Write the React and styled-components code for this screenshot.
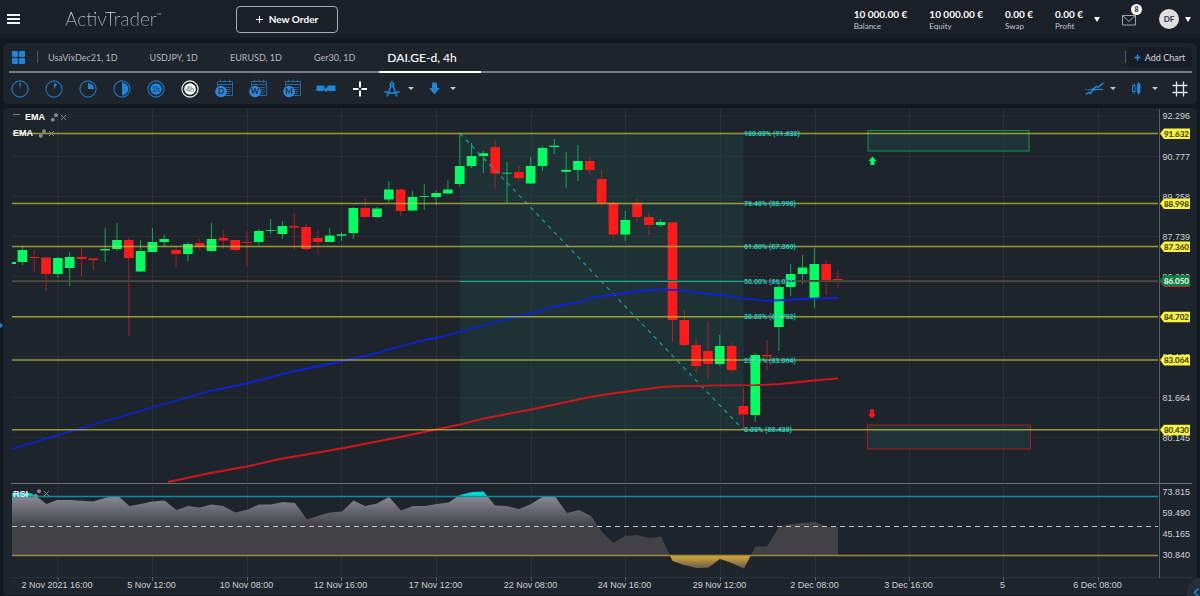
import React, { useState } from 'react';
import styled, { createGlobalStyle } from 'styled-components';

const GlobalStyle = createGlobalStyle`
  * {
    box-sizing: border-box;
  }

  body {
    margin: 0;
    background: #111820;
    color: #c3c6cb;
    font-family: Lato, 'Liberation Sans', sans-serif;
  }

  button {
    margin: 0;
    padding: 0;
    border: 0;
    background: none;
    color: inherit;
    font: inherit;
    cursor: pointer;
  }
`;

const Page = styled.div`
  position: relative;
  display: flex;
  flex-direction: column;
  padding-bottom: 1px;
  overflow: hidden;
`;

const Header = styled.header`
  display: flex;
  align-items: center;
  height: 38px;
  padding: 0 8px 0 7px;
  background: #1b1f27;
`;

const MenuButton = styled.button`
  display: flex;
  flex-direction: column;
  gap: 2px;
  width: 13px;

  span {
    height: 2px;
    background: #f2f3f4;
  }
`;

const Logo = styled.h1`
  width: 171px;
  margin: 0 0 0 45px;
  font-size: 19px;
  font-weight: 300;
  line-height: 24px;
  color: transparent;
  background: linear-gradient(#d8dce2 20%, #77808d 85%);
  background-clip: text;

  sup {
    font-size: 7px;
    line-height: 7px;
    vertical-align: 8px;
  }
`;

const NewOrder = styled.button`
  display: flex;
  align-items: center;
  justify-content: center;
  gap: 6px;
  width: 102px;
  height: 27px;
  border: 1px solid #a9abaf;
  border-radius: 4px;
  color: #fff;
  font-size: 10px;
  font-weight: 700;
`;

const Account = styled.div`
  display: flex;
  align-items: center;
  margin-left: auto;
`;

const Metrics = styled.dl`
  display: flex;
  gap: 22px;
  margin: 0;
`;

const Metric = styled.div`
  display: flex;
  flex-direction: column-reverse;

  dt {
    font-size: 8px;
    line-height: 10px;
  }

  dd {
    margin: 0;
    color: #fff;
    font-size: 10px;
    font-weight: 700;
    line-height: 13px;
  }
`;

const Caret = styled.button`
  display: flex;
  align-items: center;
  justify-content: center;
  width: ${(props) => (props.$wide ? '28px' : '8px')};
  height: 20px;

  &::before {
    content: '';
    border: solid transparent;
    border-width: ${(props) => (props.$small ? '3px 3px 0' : '5px 3px 0')};
    border-top-color: ${(props) => (props.$small ? '#c3c6cb' : '#fff')};
  }
`;

const Mail = styled.button`
  position: relative;
  display: flex;
  width: 14px;
  height: 12px;
  margin: 2px 23px 0 11px;
`;

const Badge = styled.span`
  position: absolute;
  top: -10px;
  right: -6px;
  width: 11px;
  height: 11px;
  border-radius: 50%;
  background: #fff;
  color: #1b1f27;
  font-size: 7px;
  font-weight: 900;
  line-height: 11px;
  text-align: center;
`;

const Avatar = styled.button`
  width: 20px;
  height: 20px;
  margin-right: 5px;
  border-radius: 50%;
  background: #dfdfe1;
  color: #3f4349;
  font-size: 8px;
  font-weight: 900;
`;

const Panel = styled.section`
  position: relative;
  margin: ${(props) => (props.$first ? '5px 3px 0' : '4px 3px 0')};
  border-radius: 5px;
  background: #1e242b;
`;

const TabRow = styled.div`
  display: flex;
  align-items: center;
  height: 30px;
  margin: 0 5px 0 6px;
  border-bottom: 2px solid #787b83;
`;

const LayoutButton = styled.button`
  display: grid;
  grid-template-columns: 6px 6px;
  gap: 1px;
  margin: 0 12px 0 3px;

  span {
    height: 6px;
    border-radius: 1px;
    background: #1d86d8;
  }
`;

const Divider = styled.span`
  width: 1px;
  height: 12px;
  background: #50545c;
`;

const Tabs = styled.nav`
  display: flex;
  align-self: stretch;
  margin: 0 auto -2px 2px;
`;

const Tab = styled.button`
  padding: 0 24px 0 8px;
  border-bottom: 2px solid ${(props) => (props.$active ? '#fff' : 'transparent')};
  color: ${(props) => (props.$active ? '#fff' : '#b4b7bc')};
  font-size: ${(props) => (props.$active ? '12px' : '9px')};
  font-weight: ${(props) => (props.$active ? 500 : 400)};
  white-space: nowrap;
`;

const AddChart = styled.button`
  display: flex;
  align-items: center;
  justify-content: center;
  gap: 4px;
  width: 65px;
  height: 21px;
  margin-left: 1px;
  border-radius: 4px;
  background: #171d26;
  color: #d5d7da;
  font-size: 9px;
`;

const ToolRow = styled.div`
  display: flex;
  justify-content: space-between;
  height: 31px;
`;

const Tools = styled.div`
  display: flex;
  align-items: center;
  gap: ${(props) => props.$gap || '0'};
`;

const Tool = styled.button`
  display: flex;
  align-items: center;
  justify-content: center;
  width: ${(props) => (props.$narrow ? '30px' : '34px')};
  height: 30px;
`;

const Drop = styled.div`
  display: flex;
  align-items: center;
`;

const ChartSvg = styled.svg`
  display: block;
  width: 100%;
  height: auto;
  font-family: 'Liberation Sans', Arial, sans-serif;
`;

const TagText = styled.text`
  font-family: Lato, sans-serif;
  font-size: 8px;
  font-weight: 700;
`;

const LevelText = styled.text`
  font-family: Roboto, sans-serif;
  font-size: 7px;
  font-weight: 700;
  fill: #0fd2ca;
`;

const Legend = styled.div`
  position: absolute;
  top: ${(props) => props.$top};
  left: 10px;
  display: flex;
  align-items: center;
  gap: 5px;
  height: 12px;
  color: #fff;
  font-family: 'Liberation Sans', Arial, sans-serif;
  font-size: 9px;
  font-weight: 700;
`;

const LegendActions = styled.span`
  display: flex;
  align-items: center;
  gap: 2px;

  button {
    display: flex;
  }
`;

const CollapseButton = styled.button`
  width: 7px;
  height: 6px;
  border-top: 1px solid #7c7f85;
`;

const PullTab = styled.button`
  position: absolute;
  top: 323px;
  left: -3px;
  width: 5px;
  height: 5px;
  background: #1d86d8;
  transform: rotate(45deg);
`;

const SideToggle = styled.button`
  position: absolute;
  right: -19px;
  bottom: -13px;
  display: flex;
  align-items: flex-start;
  width: 32px;
  height: 32px;
  padding: 11px 0 0 6px;
  border-radius: 50%;
  background: #262e38;
`;

const metrics = [
  ['Balance', '10 000.00 €'],
  ['Equity', '10 000.00 €'],
  ['Swap', '0.00 €'],
  ['Profit', '0.00 €'],
];

const tabs = ['UsaVixDec21, 1D', 'USDJPY, 1D', 'EURUSD, 1D', 'Ger30, 1D', 'DAI.GE-d, 4h'];

const UP = '#00ff62';
const DOWN = '#ff1a1a';

// direction, body top, body bottom, high, low
const candles = [
  ['u', 250, 262, 246, 265],
  ['d', 257, 258, 250, 272],
  ['d', 257.5, 274, 257, 291],
  ['u', 258, 274, 257, 278],
  ['u', 257, 268, 252, 286],
  ['d', 257, 259, 248, 276],
  ['d', 258.5, 260, 258, 270],
  ['u', 249, 250.4, 228, 262],
  ['u', 240, 249, 223, 251],
  ['d', 240, 258, 238, 336],
  ['u', 251, 271.5, 240, 272],
  ['u', 242, 252, 228, 252],
  ['u', 239, 242, 235, 246],
  ['d', 250, 254, 246, 267],
  ['u', 244, 254, 242, 261],
  ['d', 243, 247, 239, 250],
  ['u', 239, 251, 223, 252],
  ['d', 238, 240.5, 230, 249],
  ['d', 240, 250, 240, 251.5],
  ['d', 242, 242.8, 231, 266],
  ['u', 231, 242, 229, 245],
  ['u', 230, 230.8, 219, 234],
  ['u', 226, 234, 221, 239],
  ['d', 226, 227.5, 213, 250],
  ['d', 227, 249, 224, 251],
  ['d', 238, 242, 230, 254],
  ['u', 235.5, 242, 228, 242],
  ['u', 234.3, 235.7, 232, 241],
  ['u', 208, 233, 207, 239],
  ['d', 208, 217, 198, 217],
  ['u', 208.5, 217, 207, 218],
  ['u', 189.5, 199.5, 181, 203],
  ['d', 189.5, 211, 188, 216],
  ['u', 197, 210.5, 191, 211],
  ['u', 196, 196.8, 184, 210],
  ['u', 193, 197, 190, 205],
  ['u', 189.5, 193.5, 180, 194],
  ['u', 166, 184, 134, 187],
  ['u', 156, 166, 143, 168],
  ['u', 153.3, 156, 151, 173],
  ['d', 147, 173.5, 140, 189],
  ['u', 172.8, 173.6, 162, 203],
  ['d', 172, 178, 166, 182],
  ['u', 166, 183.5, 157, 184],
  ['u', 148, 166, 146, 171],
  ['u', 145.7, 147, 139, 154],
  ['u', 169.8, 171.8, 152, 188],
  ['u', 161, 170, 145, 181],
  ['d', 161, 170, 157, 175],
  ['d', 179, 203, 170, 207],
  ['d', 203, 234.5, 201, 241],
  ['u', 220, 234.5, 211, 241],
  ['d', 203, 217, 198, 222],
  ['d', 217, 225, 213, 235],
  ['u', 222, 225, 219, 227],
  ['d', 222.5, 320, 222, 342],
  ['d', 320, 345, 310, 346],
  ['d', 345, 366, 339, 372],
  ['d', 351, 364, 321, 379],
  ['u', 346, 364, 335, 366],
  ['d', 346, 370, 343, 373],
  ['d', 406, 414.5, 388, 429],
  ['u', 355, 415, 353, 422],
  ['d', 355, 356.4, 340, 370],
  ['u', 287, 327, 280, 351],
  ['u', 274, 287, 264, 296],
  ['u', 267.5, 274, 255, 284],
  ['u', 264, 298.5, 248, 308],
  ['d', 264, 280, 260, 295],
  ['d', 279, 281, 270, 288],
];

const blueEma =
  '12,449 58,435 78,429 130,414 152,407.5 210,391 248,383 295,371 341,361.5 376,353.5 390,349 425,340 440,337 460,332 503,320 519,316.5 535,312.5 554,306.5 580,302 593,297.5 625,293 645,290.5 661,289.3 682,290.3 708,294 720,294.8 743,298.3 766,300.8 785,300 814,298.3 838,298';
const redEma =
  '168,482 208,473.5 247,466.5 280,459 341,448.5 400,437 436,429.5 460,424.5 484,418.5 531,409.5 590,397 612,393.5 662,387 680,386.2 720,385.3 755,385.2 780,384 814,380.5 838,378.3';

const rsi =
  '12,493 30,493 36,496 46.5,504 57,500 70,500 93,501.5 107,497.5 118,496 129.5,506 141,504 152,501.5 164.5,500.5 176.5,510 188,506 199.5,507.5 211.5,504.5 223,506 235.5,512.5 248,509.5 259,504.5 271,504.5 283,502 295,503 307,519.5 319,515.5 330,512.5 342,511.5 353.5,500.5 365,506 377,503.5 389,497 401,510.5 413,506 425,506 437,504 448.5,502.5 460,495 472,492 483.5,491.5 495,505.5 507,506 519,509 531,504 543,496.5 555,496.5 567,513 579,510 591,516 602,532 613.5,543 625,536 637,535 649,538 661,536.5 672.5,561 684,565 697,568 708.5,567.5 720,559 731.5,563 744,568.5 755.5,546.5 767,546.5 779,527 790,524 803,523 815,522 827,527 838,527';
const rsiArea = `12,555.5 ${rsi} 838,555.5`;

const fibLevels = [
  { y: 133.5, price: '91.632', label: '100.00% (91.632)' },
  { y: 203.5, price: '88.998', label: '76.40% (88.998)' },
  { y: 246.5, price: '87.360', label: '61.80% (87.360)' },
  { y: 316.7, price: '84.702', label: '38.20% (84.702)' },
  { y: 360, price: '83.064', label: '23.61% (83.064)' },
  { y: 429.8, price: '80.430', label: '0.00% (80.430)' },
];

const prices = [
  [116.3, '92.296'],
  [156.5, '90.777'],
  [196.5, '89.258'],
  [236.5, '87.739'],
  [276.5, '86.220'],
  [317, '84.702'],
  [357, '83.183'],
  [397.5, '81.664'],
  [437.5, '80.145'],
];

const rsiScale = [
  [491.5, '73.815'],
  [512.5, '59.490'],
  [533.5, '45.165'],
  [554.5, '30.840'],
];

const dates = [
  [58, '2 Nov 2021 16:00'],
  [152.5, '5 Nov 12:00'],
  [247.5, '10 Nov 08:00'],
  [341.5, '12 Nov 16:00'],
  [436.5, '17 Nov 12:00'],
  [531.5, '22 Nov 08:00'],
  [625.5, '24 Nov 16:00'],
  [720.5, '29 Nov 12:00'],
  [815.5, '2 Dec 08:00'],
  [909.5, '3 Dec 16:00'],
  [1003.5, '5'],
  [1098.5, '6 Dec 08:00'],
];

const ClockIcon = ({ wedge, label, active }) => (
  <svg width="18" height="18" viewBox="0 0 18 18">
    <circle cx="9" cy="9" r="8.1" fill="none" stroke={active ? '#fff' : '#1a7bc4'} strokeWidth="1.1" />
    {wedge && <path d={wedge} fill="#1d86d8" />}
    {label && (
      <>
        <circle cx="9" cy="9" r="5.8" fill={active ? '#fff' : '#1d86d8'} />
        <text
          x="9"
          y="11.5"
          textAnchor="middle"
          fontSize="7"
          fontWeight="700"
          fill={active ? '#777b82' : '#14508a'}
        >
          {label}
        </text>
      </>
    )}
  </svg>
);

const CalendarIcon = ({ letter }) => (
  <svg width="20" height="19" viewBox="0 0 20 19">
    <path d="M3.5 7V2.5h15v14h-8" fill="none" stroke="#2a659f" />
    <path d="M3.5 5.5h15M6.5 .5v3M11 .5v3M15.500 .5v3" stroke="#2a659f" />
    <path d="M8 8.500h9M11 10.500h6M12 12.500h5M12 14.500h4" stroke="#3577b8" strokeDasharray="1.300 .8" />
    <circle cx="7" cy="12.5" r="5.8" fill="#2f86d8" />
    <text x="7" y="15.3" textAnchor="middle" fontSize="8" fontWeight="700" fill="#12304f">
      {letter}
    </text>
  </svg>
);

const timeframes = [
  ['1 minute', <ClockIcon wedge="M9 9 8.300 3h1.700z" />],
  ['5 minutes', <ClockIcon wedge="M9 9V3.300a5.700 5.700 0 0 1 3 .9z" />],
  ['15 minutes', <ClockIcon wedge="M9 9V3a6 6 0 0 1 6 6z" />],
  ['30 minutes', <ClockIcon wedge="M9 2.600a6.400 6.400 0 0 1 0 12.800z" />],
  ['1 hour', <ClockIcon label="1h" />],
  ['4 hours', <ClockIcon label="4h" active />],
  ['Daily', <CalendarIcon letter="D" />],
  ['Weekly', <CalendarIcon letter="W" />],
  ['Monthly', <CalendarIcon letter="M" />],
];

const LegendItem = ({ name, top, collapsible }) => (
  <Legend $top={top}>
    {collapsible && <CollapseButton aria-label="Collapse" />}
    <span>{name}</span>
    <LegendActions>
      <button aria-label={`${name} settings`}>
        <svg width="9" height="9" viewBox="0 0 9 9" fill="#84878c">
          <circle cx="6" cy="2.300" r="2" />
          <circle cx="2.800" cy="6.700" r="2" />
        </svg>
      </button>
      <button aria-label={`Remove ${name}`}>
        <svg width="5" height="5" viewBox="0 0 5 5">
          <path d="M0 0l5 5M5 0l-5 5" stroke="#84878c" />
        </svg>
      </button>
    </LegendActions>
  </Legend>
);

const Candle = ({ index, data }) => {
  const [dir, top, bottom, high, low] = data;
  const x = 22.4 + index * 11.82;
  const color = dir === 'u' ? UP : DOWN;
  return (
    <g>
      <line x1={x} x2={x} y1={high} y2={low} stroke={color} strokeOpacity="0.6" />
      <rect x={x - 4.8} y={top} width="9.6" height={bottom - top} fill={color} />
    </g>
  );
};

const PriceTag = ({ y, children, fill = '#fbf53a', color = '#2c2b0c' }) => (
  <g>
    <path d={`M1160 ${y}l4-5h26v10.500h-26z`} fill={fill} />
    <TagText x="1189" y={y + 3} textAnchor="end" fill={color}>
      {children}
    </TagText>
  </g>
);

const Chart = () => (
  <ChartSvg viewBox="3 108 1194 487" role="img" aria-label="DAI.GE-d 4h price chart with RSI">
    <defs>
      <linearGradient id="rsiFill" gradientUnits="userSpaceOnUse" x1="0" y1="496" x2="0" y2="526">
        <stop offset="0" stopColor="#8a8a98" />
        <stop offset="1" stopColor="#414146" />
      </linearGradient>
      <linearGradient id="lowFill" gradientUnits="userSpaceOnUse" x1="0" y1="556" x2="0" y2="566">
        <stop offset="0" stopColor="#d9a836" />
        <stop offset="1" stopColor="#75694a" />
      </linearGradient>
      <clipPath id="above">
        <rect x="12" y="485" width="830" height="11.5" />
      </clipPath>
      <clipPath id="between">
        <rect x="12" y="496.5" width="830" height="59" />
      </clipPath>
      <clipPath id="below">
        <rect x="12" y="555.5" width="830" height="20" />
      </clipPath>
    </defs>

    {dates.map(([x]) => (
      <path key={x} d={`M${x} 109v373M${x} 485v91`} stroke="#2c3036" />
    ))}
    {prices.map(([y]) => (
      <path key={y} d={`M12 ${y}h1146`} stroke="#2a2e33" />
    ))}

    <rect x="460" y="133.5" width="283.5" height="296" fill="#1e4a4b" fillOpacity="0.36" />
    <rect x="868" y="130.5" width="161" height="20.500" fill="#1e3a3f" fillOpacity="0.7" stroke="#0c9a3c" />
    <rect x="867.5" y="425" width="163" height="24" fill="#1e3a3f" fillOpacity="0.7" stroke="#b01820" />

    {candles.map((data, index) => (
      <Candle key={index} index={index} data={data} />
    ))}
    <rect x="12" y="262" width="4" height="2" fill={UP} />

    <path d="M460 133.500 743 429.500" fill="none" stroke="#12a3a3" strokeWidth="1.200" strokeDasharray="4 4.500" />
    <polyline points={blueEma} fill="none" stroke="#0a22e0" strokeWidth="1.8" />
    <polyline points={redEma} fill="none" stroke="#d3151b" strokeWidth="1.8" />

    <path d="M12 280.500H1158" stroke="#1d4f3c" />
    <path d="M12 281.500H1158" stroke="#7f3d37" />
    <path d="M460 281.500h283.500" stroke="#17b8a0" strokeWidth="1.200" />
    {fibLevels.map(({ y, label }) => (
      <g key={label}>
        <path d={`M12 ${y}H1158`} stroke="#d8d33c" strokeOpacity="0.66" strokeWidth="1.400" />
        <LevelText x="744" y={y + 2.5}>
          {label}
        </LevelText>
      </g>
    ))}
    <LevelText x="744" y="284">
      50.00% (86.031)
    </LevelText>

    <path d="M872.500 156.500l4 4.500h-2v4h-4v-4h-2z" fill={UP} />
    <path d="M872 418.500l4-4.500h-2v-4.500h-4v4.500h-2z" fill="#ff0f1a" />

    <polygon points={rsiArea} fill="#00d6d6" clipPath="url(#above)" />
    <polygon points={rsiArea} fill="url(#rsiFill)" clipPath="url(#between)" />
    <polygon points={rsiArea} fill="url(#lowFill)" clipPath="url(#below)" />
    <path d="M12 496.500H1158" stroke="#0b8f98" strokeWidth="1.300" />
    <path d="M12 526.500H1158" stroke="#c2c4c6" strokeDasharray="5 4" />
    <path d="M12 555.500H1158" stroke="#a08640" strokeWidth="1.300" />

    <path d="M11 483.500H1192" stroke="#6a6d72" />
    <path d="M11 577.500H1192" stroke="#2b323b" />
    <path d="M1159.500 109V578" stroke="#5a5e65" />

    {[...prices, ...rsiScale].map(([y, label]) => (
      <text key={label} x="1190" y={y + 3} textAnchor="end" fontSize="9" fill="#cfd1d4">
        {label}
      </text>
    ))}
    {dates.map(([x, label]) => (
      <g key={label}>
        <path d={`M${x} 577v4`} stroke="#5a5e65" />
        <text x={x - 1} y="588" textAnchor="middle" fontSize="9" fill="#cfd1d4">
          {label}
        </text>
      </g>
    ))}

    {fibLevels.map(({ y, price }) => (
      <PriceTag key={price} y={y}>
        {price}
      </PriceTag>
    ))}
    <PriceTag y={281.5} fill="#c42a20" />
    <PriceTag y={280.5} fill="#0b8040" color="#fff">
      86.050
    </PriceTag>
  </ChartSvg>
);

const App = () => {
  const [activeTab, setActiveTab] = useState('DAI.GE-d, 4h');

  return (
    <Page>
      <GlobalStyle />
      <Header>
        <MenuButton aria-label="Menu">
          <span />
          <span />
          <span />
        </MenuButton>
        <Logo>
          ActivTrader<sup>™</sup>
        </Logo>
        <NewOrder>
          <svg width="7" height="7" viewBox="0 0 7 7">
            <path d="M3.500 0v7M0 3.500h7" stroke="#fff" />
          </svg>
          New Order
        </NewOrder>
        <Account>
          <Metrics>
            {metrics.map(([label, value]) => (
              <Metric key={label}>
                <dt>{label}</dt>
                <dd>{value}</dd>
              </Metric>
            ))}
          </Metrics>
          <Caret $wide aria-label="Account details" />
          <Mail aria-label="Messages">
            <svg width="14" height="12" viewBox="0 0 14 12" fill="none" stroke="#a0a3a8">
              <path d="M.5 1.500h13v9.500H.5zM.5 1.500 7 7.500l6.500-6" />
            </svg>
            <Badge>8</Badge>
          </Mail>
          <Avatar>DF</Avatar>
          <Caret aria-label="User menu" />
        </Account>
      </Header>

      <Panel $first>
        <TabRow>
          <LayoutButton aria-label="Layout">
            <span />
            <span />
            <span />
            <span />
          </LayoutButton>
          <Divider />
          <Tabs>
            {tabs.map((tab) => (
              <Tab key={tab} $active={tab === activeTab} onClick={() => setActiveTab(tab)}>
                {tab}
              </Tab>
            ))}
          </Tabs>
          <Divider />
          <AddChart>
            <svg width="7" height="7" viewBox="0 0 7 7">
              <path d="M3.500 .5v6M.5 3.500h6" stroke="#2296ee" strokeWidth="1.400" />
            </svg>
            Add Chart
          </AddChart>
        </TabRow>
        <ToolRow>
          <Tools>
            {timeframes.map(([name, icon]) => (
              <Tool key={name} aria-label={name}>
                {icon}
              </Tool>
            ))}
            <Tool aria-label="One click trading">
              <svg width="20" height="7" viewBox="0 0 20 7" fill="#1d86d8">
                <path d="M.5 .5h8v3h1.500v-1h1.500v1V.5h8v5.500h-7V5h-1v1.500h-3V5h-1v1h-7z" />
              </svg>
            </Tool>
            <Tool aria-label="Crosshair">
              <svg width="14" height="16" viewBox="0 0 14 16" stroke="#fff" strokeWidth="2">
                <path d="M7 .5v6M7 9.500v6M0 8h5.500M8.500 8H14" />
              </svg>
            </Tool>
            <Tools $gap="4px">
              <Drop>
                <Tool $narrow aria-label="Drawing tools">
                  <svg width="16" height="16" viewBox="0 0 16 16" fill="none" stroke="#1d86d8" strokeWidth="1.6">
                    <circle cx="8" cy="3.500" r="1.800" />
                    <path d="M8 0v2M7 5 3 15.500M9 5l4 10.500M.5 10.500c5 2 10 2 15 0" />
                  </svg>
                </Tool>
                <Caret $small aria-label="More drawing tools" />
              </Drop>
              <Drop>
                <Tool $narrow aria-label="Arrows">
                  <svg width="11" height="13" viewBox="0 0 11 13" fill="#1d86d8">
                    <path d="M3 1.500q0-1 1-1h3q1 0 1 1V6H10.800L5.500 12.500.2 6H3z" />
                  </svg>
                </Tool>
                <Caret $small aria-label="More arrows" />
              </Drop>
            </Tools>
          </Tools>
          <Tools $gap="4px">
            <Drop>
              <Tool $narrow aria-label="Indicators">
                <svg width="19" height="14" viewBox="0 0 19 14" fill="none" stroke="#1d86d8">
                  <path d="M0 7.500h6" strokeDasharray="1.500 1" />
                  <path d="M6 7.500h12" strokeWidth="1.300" />
                  <path d="M1 12.500 3.500 10.500 5.500 11.500 8 7.500 11 4.500 13.500 5 18.500 .8" strokeWidth="1.600" />
                  <circle cx="8.500" cy="7.500" r="1.600" fill="#1d86d8" stroke="none" />
                </svg>
              </Tool>
              <Caret $small aria-label="More indicators" />
            </Drop>
            <Drop>
              <Tool $narrow aria-label="Chart type">
                <svg width="9" height="13" viewBox="0 0 9 13" fill="none" stroke="#1d86d8">
                  <path d="M2 1.500v2M2 9.500v2M6.500 0v13" />
                  <rect x=".5" y="3.500" width="2.500" height="6" />
                  <rect x="5.500" y="2" width="2.500" height="8.500" fill="#1d86d8" />
                </svg>
              </Tool>
              <Caret $small aria-label="More chart types" />
            </Drop>
            <Tool aria-label="Grid">
              <svg width="16" height="16" viewBox="0 0 16 16" stroke="#e3e4e6" strokeWidth="1.300">
                <path d="M4.500 .5v15M11.500 .5v15M.5 4.500h15M.5 11.500h15" />
              </svg>
            </Tool>
          </Tools>
        </ToolRow>
      </Panel>

      <Panel>
        <Chart />
        <LegendItem name="EMA" top="3px" collapsible />
        <LegendItem name="EMA" top="19px" />
        <LegendItem name="RSI" top="78%" />
      </Panel>

      <PullTab aria-label="Open watchlist" />
      <SideToggle aria-label="Open side panel">
        <svg width="7" height="9" viewBox="0 0 7 9" fill="none" stroke="#1d86d8" strokeWidth="1.5">
          <path d="M5.500 .5 1.500 4.500l4 4" />
        </svg>
      </SideToggle>
    </Page>
  );
};

export default App;
